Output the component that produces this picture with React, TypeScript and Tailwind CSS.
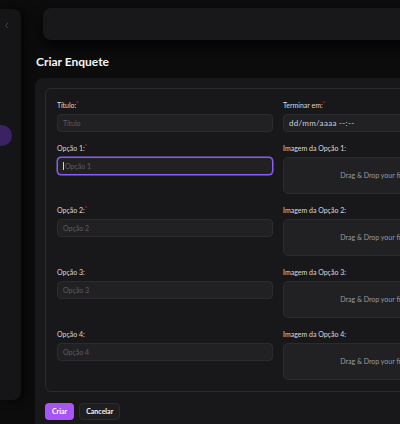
import { ChevronLeft } from "lucide-react";

const rows = [
  { label: "Opção 1", required: true, focused: true },
  { label: "Opção 2", required: true, focused: false },
  { label: "Opção 3", required: false, focused: false },
  { label: "Opção 4", required: false, focused: false },
];

function Label({ text, required }: { text: string; required?: boolean }) {
  return (
    <div className="h-[10px] mb-[4px] text-[7px] leading-[10px] text-[#d9d9dd] flex items-start">
      <span>{text}</span>
      {required && <span className="text-[5px] leading-[6px] text-[#ef4444]">*</span>}
    </div>
  );
}

function TextInput({ placeholder, focused }: { placeholder: string; focused?: boolean }) {
  return (
    <div
      className={
        focused
          ? "h-[18px] rounded-[4px] bg-[#212124] border border-[#8b5cf6] ring-[0.5px] ring-[#8b5cf6] px-[5px] flex items-center text-[7px] text-[#5c5c62]"
          : "h-[18px] rounded-[4px] bg-[#212124] border border-[#2c2c30] px-[5px] flex items-center text-[7px] text-[#5c5c62]"
      }
    >
      {focused && <span className="w-px h-[8px] bg-[#d4d4d8] mr-px" />}
      {placeholder}
    </div>
  );
}

function DropZone() {
  return (
    <div className="h-[37px] rounded-[5px] bg-[#212124] border border-[#2c2c30] flex items-center justify-center text-[7px] text-[#9a9aa0]">
      Drag &amp; Drop your files or&nbsp;<span className="underline">Browse</span>
    </div>
  );
}

export default function App() {
  return (
    <div
      className="w-[400px] h-[424px] overflow-hidden bg-[#0c0c0d] flex"
      style={{ fontFamily: "Lato, 'Open Sans', sans-serif" }}
    >
      {/* collapsed sidebar */}
      <aside className="shrink-0 w-[21px] mt-[9px] h-[391px] rounded-r-[8px] bg-[#151517] shadow-[4px_0_10px_rgba(0,0,0,0.7)] flex flex-col overflow-hidden">
        <div className="mt-[12px] ml-[2px] text-[#5a5a5f]">
          <ChevronLeft size={9} strokeWidth={2} />
        </div>
        <div className="mt-[95px] -ml-[10px] w-[22px] h-[21px] rounded-full bg-[#3a2263]" />
      </aside>

      <main className="shrink-0 ml-[14px] w-[486px] flex flex-col">
        <div className="mt-[8px] ml-[8px] h-[32px] rounded-[8px] bg-[#18181a] shadow-[0_6px_14px_rgba(0,0,0,0.9)]" />

        <h1 className="mt-[14px] ml-px h-[16px] text-[12px] leading-[16px] font-bold text-[#f4f4f5]">
          Criar Enquete
        </h1>

        <section className="mt-[8px] flex-1 rounded-t-[8px] bg-[#18181b] px-[10px] pt-[10px]">
          <div className="rounded-[6px] border border-[#2a2a2e] p-[11px] grid grid-cols-[216px_216px] gap-x-[10px] gap-y-[11px]">
            <div>
              <Label text="Título:" required />
              <TextInput placeholder="Título" />
            </div>
            <div>
              <Label text="Terminar em:" required />
              <div className="h-[18px] rounded-[4px] bg-[#212124] border border-[#2c2c30] px-[5px] flex items-center text-[8px] tracking-[0.3px] text-[#d0d0d4]">
                dd/mm/aaaa --:--
              </div>
            </div>
            {rows.map((r) => (
              <div key={r.label} className="contents">
                <div>
                  <Label text={`${r.label}:`} required={r.required} />
                  <TextInput placeholder={r.label} focused={r.focused} />
                </div>
                <div>
                  <Label text={`Imagem da ${r.label}:`} />
                  <DropZone />
                </div>
              </div>
            ))}
          </div>

          <div className="mt-[11px] flex gap-[5px]">
            <button className="h-[17px] px-[7px] rounded-[4px] bg-[#a855f7] text-[7px] font-bold text-white">
              Criar
            </button>
            <button className="h-[17px] px-[6px] rounded-[4px] bg-[#1e1e21] border border-[#2c2c30] text-[7px] font-bold text-[#f4f4f5]">
              Cancelar
            </button>
          </div>
        </section>
      </main>
    </div>
  );
}
